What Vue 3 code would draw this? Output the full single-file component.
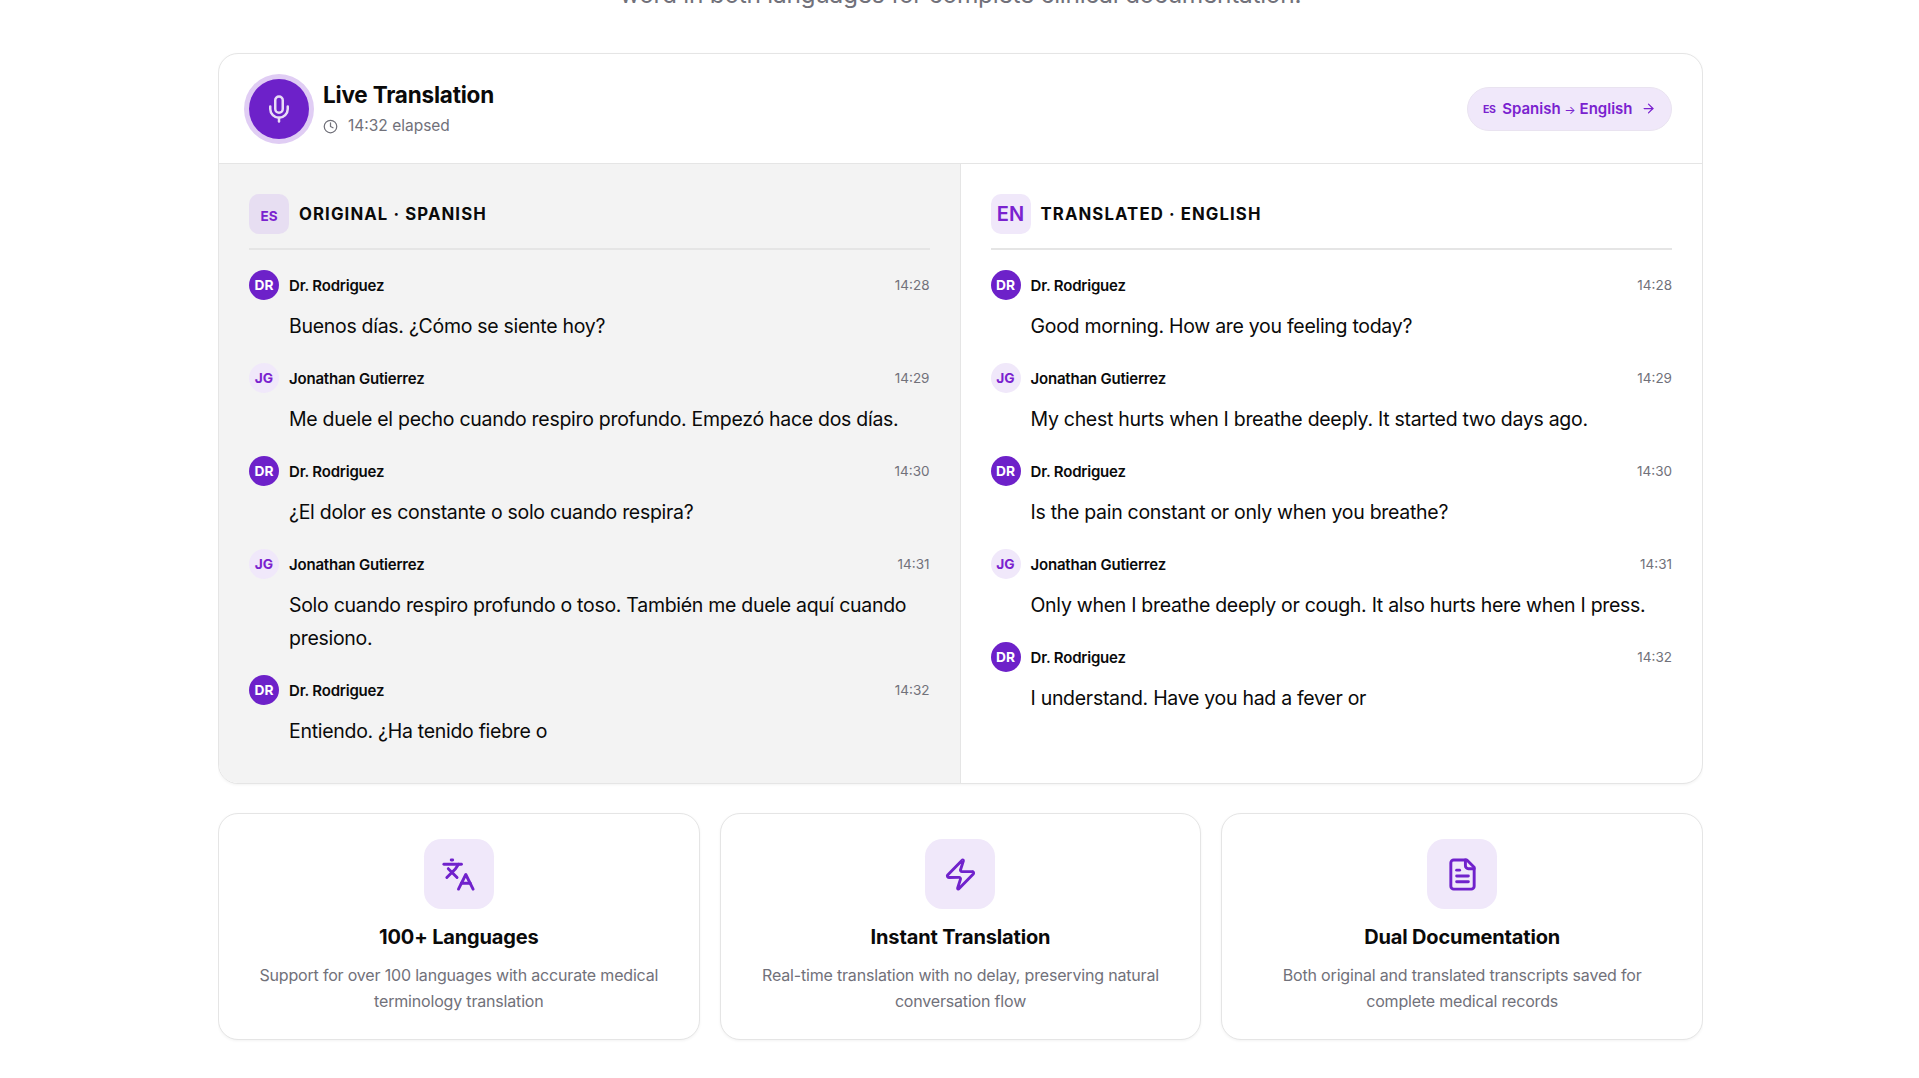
<script setup>
const dr = { initials: 'DR', name: 'Dr. Rodriguez', doctor: true }
const jg = { initials: 'JG', name: 'Jonathan Gutierrez', doctor: false }

const panels = [
  {
    code: 'ES',
    title: 'Original · Spanish',
    muted: true,
    messages: [
      { who: dr, time: '14:28', text: 'Buenos días. ¿Cómo se siente hoy?' },
      { who: jg, time: '14:29', text: 'Me duele el pecho cuando respiro profundo. Empezó hace dos días.' },
      { who: dr, time: '14:30', text: '¿El dolor es constante o solo cuando respira?' },
      { who: jg, time: '14:31', text: 'Solo cuando respiro profundo o toso. También me duele aquí cuando presiono.' },
      { who: dr, time: '14:32', text: 'Entiendo. ¿Ha tenido fiebre o' },
    ],
  },
  {
    code: 'EN',
    title: 'Translated · English',
    muted: false,
    messages: [
      { who: dr, time: '14:28', text: 'Good morning. How are you feeling today?' },
      { who: jg, time: '14:29', text: 'My chest hurts when I breathe deeply. It started two days ago.' },
      { who: dr, time: '14:30', text: 'Is the pain constant or only when you breathe?' },
      { who: jg, time: '14:31', text: 'Only when I breathe deeply or cough. It also hurts here when I press.' },
      { who: dr, time: '14:32', text: 'I understand. Have you had a fever or' },
    ],
  },
]

const features = [
  {
    title: '100+ Languages',
    text: 'Support for over 100 languages with accurate medical terminology translation',
    paths: ['m5 8 6 6', 'm4 14 6-6 2-3', 'M2 5h12', 'M7 2h1', 'm22 22-5-10-5 10', 'M14 18h6'],
  },
  {
    title: 'Instant Translation',
    text: 'Real-time translation with no delay, preserving natural conversation flow',
    paths: ['M4 14a1 1 0 0 1-.78-1.63l9.9-10.2a.5.5 0 0 1 .86.46l-1.92 6.02A1 1 0 0 0 13 10h7a1 1 0 0 1 .78 1.63l-9.9 10.2a.5.5 0 0 1-.86-.46l1.92-6.02A1 1 0 0 0 11 14z'],
  },
  {
    title: 'Dual Documentation',
    text: 'Both original and translated transcripts saved for complete medical records',
    paths: ['M15 2H6a2 2 0 0 0-2 2v16a2 2 0 0 0 2 2h12a2 2 0 0 0 2-2V7Z', 'M14 2v4a2 2 0 0 0 2 2h4', 'M10 9H8', 'M16 13H8', 'M16 17H8'],
  },
]
</script>

<template>
  <main class="page">
    <p class="intro">word in both languages for complete clinical documentation.</p>

    <section class="live">
      <header class="live-head">
        <div class="live-id">
          <div class="mic">
            <svg width="30" height="30" viewBox="0 0 24 24" fill="none" stroke="currentColor" stroke-width="2" stroke-linecap="round" stroke-linejoin="round">
              <path d="M12 2a3 3 0 0 0-3 3v7a3 3 0 0 0 6 0V5a3 3 0 0 0-3-3Z" />
              <path d="M19 10v2a7 7 0 0 1-14 0v-2" />
              <line x1="12" x2="12" y1="19" y2="22" />
            </svg>
          </div>
          <div>
            <h2>Live Translation</h2>
            <div class="elapsed">
              <svg width="15" height="15" viewBox="0 0 24 24" fill="none" stroke="currentColor" stroke-width="2" stroke-linecap="round" stroke-linejoin="round">
                <circle cx="12" cy="12" r="10" />
                <polyline points="12 6 12 12 16 14" />
              </svg>
              <span>14:32 elapsed</span>
            </div>
          </div>
        </div>
        <div class="lang-badge">
          <span class="flag">ES</span>
          <span>Spanish <span class="thin-arrow">→</span> English</span>
          <svg width="15" height="15" viewBox="0 0 24 24" fill="none" stroke="currentColor" stroke-width="2" stroke-linecap="round" stroke-linejoin="round">
            <path d="M5 12h14" />
            <path d="m12 5 7 7-7 7" />
          </svg>
        </div>
      </header>

      <div class="columns">
        <div v-for="p in panels" :key="p.code" :class="['panel', { muted: p.muted }]">
          <div class="panel-head">
            <span :class="['chip', p.code.toLowerCase()]">{{ p.code }}</span>
            <h3>{{ p.title }}</h3>
          </div>
          <div class="messages">
            <div v-for="m in p.messages" :key="m.time" class="msg">
              <div class="msg-head">
                <span :class="['avatar', { doctor: m.who.doctor }]">{{ m.who.initials }}</span>
                <span class="name">{{ m.who.name }}</span>
                <span class="time">{{ m.time }}</span>
              </div>
              <p class="text">{{ m.text }}</p>
            </div>
          </div>
        </div>
      </div>
    </section>

    <section class="features">
      <article v-for="f in features" :key="f.title" class="feature">
        <div class="feature-icon">
          <svg width="35" height="35" viewBox="0 0 24 24" fill="none" stroke="currentColor" stroke-width="2" stroke-linecap="round" stroke-linejoin="round">
            <path v-for="d in f.paths" :key="d" :d="d" />
          </svg>
        </div>
        <h4>{{ f.title }}</h4>
        <p>{{ f.text }}</p>
      </article>
    </section>
  </main>
</template>

<style scoped>
* {
  box-sizing: border-box;
}

.page {
  width: 1485px;
  margin: 0 0 0 218px;
  height: 1078px;
  overflow: hidden;
  font-family: Inter, "Liberation Sans", sans-serif;
  color: #0a0a0a;
}

.intro {
  margin: -23px 0 0;
  height: 76px;
  font-size: 24.5px;
  line-height: 35px;
  letter-spacing: -0.3px;
  text-align: center;
  color: #71717a;
}

.live {
  border: 1.25px solid #e5e5e5;
  border-radius: 20px;
  background: #fff;
  overflow: hidden;
  box-shadow: 0 1px 3px rgba(0, 0, 0, 0.05);
}

.live-head {
  display: flex;
  align-items: center;
  justify-content: space-between;
  height: 110px;
  padding: 0 30px;
  border-bottom: 1.25px solid #e5e5e5;
}

.live-id {
  display: flex;
  align-items: center;
  gap: 14px;
}

.mic {
  width: 60px;
  height: 60px;
  border-radius: 50%;
  background: #6d21c9;
  color: #e8dcf6;
  display: flex;
  align-items: center;
  justify-content: center;
  box-shadow: 0 0 0 5px #e0cdf4;
}

h2 {
  margin: 0;
  font-size: 22.5px;
  line-height: 30px;
  font-weight: 700;
  letter-spacing: -0.2px;
}

.elapsed {
  display: flex;
  align-items: center;
  gap: 10px;
  margin-top: 5px;
  font-size: 15.5px;
  line-height: 22px;
  color: #71717a;
}

.lang-badge {
  display: flex;
  align-items: center;
  gap: 6.5px;
  height: 44px;
  padding: 0 15px;
  border: 1.25px solid #e9e3f0;
  border-radius: 999px;
  background: #f0e8fa;
  color: #7a22cf;
  font-size: 15px;
  font-weight: 600;
}

.lang-badge svg {
  margin-left: 2px;
}

.thin-arrow {
  font-weight: 400;
  font-size: 12px;
}

.flag {
  font-size: 10.5px;
  font-weight: 700;
  letter-spacing: -0.3px;
  padding-top: 2px;
}

.columns {
  display: grid;
  grid-template-columns: 1fr 1fr;
}

.panel {
  padding: 30px;
  height: 619px;
}

.panel.muted {
  background: #f3f3f3;
  border-right: 1.25px solid #e5e5e5;
}

.panel-head {
  display: flex;
  align-items: center;
  gap: 10px;
  padding-bottom: 14px;
  border-bottom: 2.5px solid #e5e5e5;
  margin-bottom: 20px;
}

.chip {
  width: 40px;
  height: 40px;
  border-radius: 10px;
  background: #f0e8fa;
  color: #7a22cf;
  display: flex;
  align-items: center;
  justify-content: center;
  font-size: 20px;
  font-weight: 600;
}

.chip.es {
  background: #e7def2;
  font-size: 13.5px;
  font-weight: 700;
  padding-top: 3px;
}

h3 {
  margin: 0;
  font-size: 16.75px;
  font-weight: 700;
  letter-spacing: 1.1px;
  text-transform: uppercase;
}

.msg {
  margin-bottom: 20px;
}

.msg-head {
  display: flex;
  align-items: center;
  gap: 10px;
}

.avatar {
  width: 30px;
  height: 30px;
  border-radius: 50%;
  background: #f0e8fa;
  color: #7a22cf;
  display: flex;
  align-items: center;
  justify-content: center;
  font-size: 13.75px;
  font-weight: 700;
}

.avatar.doctor {
  background: #6d21c9;
  color: #fff;
}

.name {
  font-size: 15px;
  font-weight: 600;
  letter-spacing: -0.2px;
}

.time {
  margin-left: auto;
  font-size: 13.5px;
  color: #71717a;
}

.text {
  margin: 10px 0 0;
  padding-left: 40px;
  font-size: 19.5px;
  line-height: 33px;
  letter-spacing: -0.29px;
}

.features {
  display: grid;
  grid-template-columns: repeat(3, 1fr);
  gap: 20px;
  margin-top: 29px;
}

.feature {
  border: 1.25px solid #e5e5e5;
  border-radius: 20px;
  background: #fff;
  padding: 25px;
  text-align: center;
  box-shadow: 0 1px 3px rgba(0, 0, 0, 0.05);
}

.feature-icon {
  width: 70px;
  height: 70px;
  margin: 0 auto 13px;
  border-radius: 17.5px;
  background: #f0e8fa;
  color: #7022cc;
  display: flex;
  align-items: center;
  justify-content: center;
}

h4 {
  margin: 0 0 10px;
  font-size: 20px;
  line-height: 30px;
  font-weight: 700;
  letter-spacing: -0.15px;
}

.feature p {
  margin: 0;
  font-size: 16px;
  line-height: 26px;
  letter-spacing: -0.18px;
  color: #71717a;
}
</style>
